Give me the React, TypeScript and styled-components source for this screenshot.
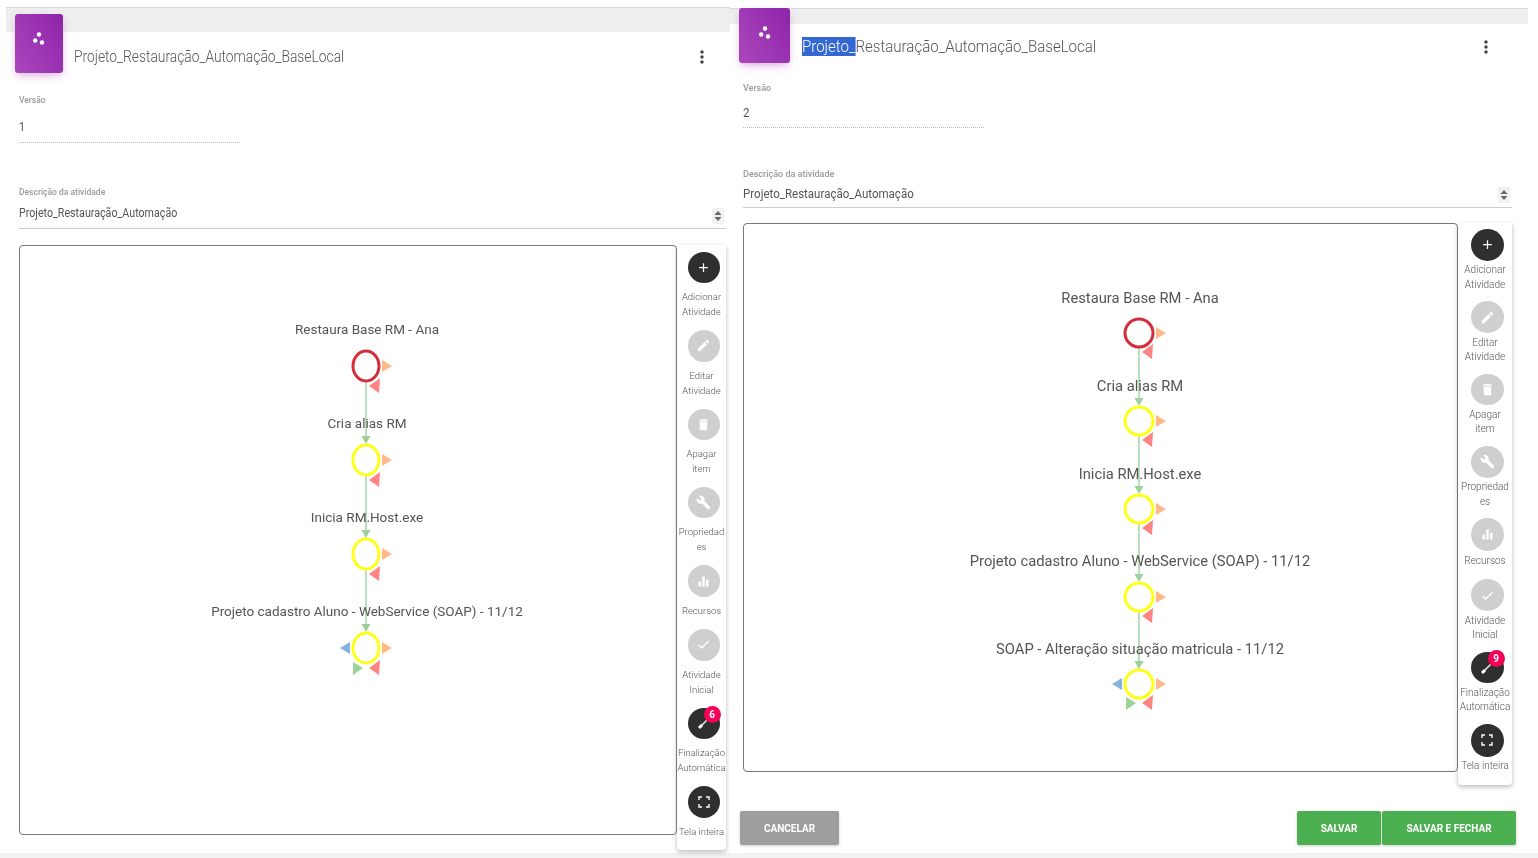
import React from "react";
import styled, { createGlobalStyle } from "styled-components";
import { MdAdd, MdEdit, MdDelete, MdBuild, MdEqualizer, MdCheck, MdMoreVert } from "react-icons/md";

type Metrics = {
  width: number;
  bandHeight: number;
  bandTop: number;
  logoW: number;
  logoH: number;
  logoTop: number;
  titleGap: number;
  titleScale: number;
  kebabRight: number;
  contentRight: number;
  versionGap: number;
  versionValueGap: number;
  versionPad: number;
  versionWidth: number;
  labelSize: number;
  descGap: number;
  descValueGap: number;
  descPad: number;
  valueScale: number;
  canvasGap: number;
  canvasW: number;
  canvasH: number;
  toolW: number;
  toolH: number;
  toolPad: number;
  toolMin: number;
  circle: number;
  toolLabelSize: number;
  toolLabelInset: number;
  labelGap: number;
  labelLine: number;
  itemGap: number;
  nodeRx: number;
  nodeRy: number;
  graphSize: number;
};

const leftMetrics: Metrics = {
  width: 724,
  bandHeight: 25,
  bandTop: 7,
  logoW: 48,
  logoH: 59,
  logoTop: -18,
  titleGap: 11,
  titleScale: 0.863,
  kebabRight: 18,
  contentRight: 4,
  versionGap: 21,
  versionValueGap: 13,
  versionPad: 7,
  versionWidth: 221,
  labelSize: 8.5,
  descGap: 43,
  descValueGap: 7,
  descPad: 7,
  valueScale: 0.89,
  canvasGap: 16,
  canvasW: 658,
  canvasH: 590,
  toolW: 49,
  toolH: 605,
  toolPad: 7,
  toolMin: 53,
  circle: 32,
  toolLabelSize: 9.5,
  toolLabelInset: 0,
  labelGap: 6,
  labelLine: 15,
  itemGap: 11,
  nodeRx: 13,
  nodeRy: 15,
  graphSize: 13.5,
};

const rightMetrics: Metrics = {
  width: 798,
  bandHeight: 16,
  bandTop: 8,
  logoW: 51,
  logoH: 55,
  logoTop: -16,
  titleGap: 12,
  titleScale: 0.94,
  kebabRight: 32,
  contentRight: 16,
  versionGap: 19,
  versionValueGap: 11,
  versionPad: 6,
  versionWidth: 241,
  labelSize: 9,
  descGap: 40,
  descValueGap: 6,
  descPad: 5,
  valueScale: 0.96,
  canvasGap: 15,
  canvasW: 715,
  canvasH: 549,
  toolW: 54,
  toolH: 562,
  toolPad: 6,
  toolMin: 52,
  circle: 33,
  toolLabelSize: 10,
  toolLabelInset: 1,
  labelGap: 2.5,
  labelLine: 14.5,
  itemGap: 9,
  nodeRx: 14,
  nodeRy: 14,
  graphSize: 14.75,
};

const GlobalStyle = createGlobalStyle`
  html, body {
    margin: 0;
    padding: 0;
    background: #f4f4f4;
    overflow: hidden;
  }
  body {
    font-family: Roboto, "Liberation Sans", sans-serif;
    color: #555;
  }
`;

const Page = styled.div`
  display: flex;
  width: 1538px;
  height: 858px;
  padding-left: 6px;
  box-sizing: border-box;
  background: linear-gradient(#fff 853px, #f2f2f2 853px);
  filter: blur(0.5px);
`;

const Panel = styled.section<{ $m: Metrics }>`
  width: ${(p) => p.$m.width}px;
  height: 853px;
  padding-top: ${(p) => p.$m.bandTop}px;
  box-sizing: border-box;
  background: #fff;
`;

const Band = styled.div<{ $m: Metrics }>`
  height: ${(p) => p.$m.bandHeight}px;
  background: #eee;
  border-top: 1px solid #d9d9d9;
  box-sizing: border-box;
`;

const Header = styled.header<{ $m: Metrics }>`
  display: flex;
  align-items: flex-end;
  margin-top: ${(p) => p.$m.logoTop}px;
  padding: 0 ${(p) => p.$m.kebabRight}px 0 9px;
  position: relative;
`;

const Logo = styled.div<{ $m: Metrics }>`
  width: ${(p) => p.$m.logoW}px;
  height: ${(p) => p.$m.logoH}px;
  flex: none;
  display: flex;
  justify-content: center;
  padding-top: 17px;
  box-sizing: border-box;
  border-radius: 3px;
  background: linear-gradient(60deg, #ab47bc, #8e24aa);
  box-shadow: 0 4px 10px -2px rgba(156, 39, 176, 0.4);
`;

const Title = styled.h1<{ $m: Metrics }>`
  margin: 0 0 6px ${(p) => p.$m.titleGap}px;
  font-size: 16px;
  line-height: 20px;
  font-weight: 300;
  color: #555;
  transform: scaleX(${(p) => p.$m.titleScale});
  transform-origin: left center;
`;

const Selected = styled.span`
  background: #3367d1;
  color: #fff;
`;

const Kebab = styled.button`
  margin: 0 0 6px auto;
  padding: 0;
  width: 20px;
  height: 20px;
  border: 0;
  background: none;
  color: #444;
  font-size: 20px;
  display: flex;
`;

const Content = styled.div<{ $m: Metrics }>`
  padding: 0 ${(p) => p.$m.contentRight}px 0 13px;
`;

const FieldLabel = styled.div<{ $m: Metrics }>`
  font-size: ${(p) => p.$m.labelSize}px;
  font-weight: 500;
  line-height: 12px;
  color: #999;
`;

const VersionField = styled.div<{ $m: Metrics }>`
  width: ${(p) => p.$m.versionWidth}px;
  margin-top: ${(p) => p.$m.versionGap}px;
  border-bottom: 1px dotted #bbb;
  padding-bottom: ${(p) => p.$m.versionPad}px;

  ${FieldLabel} {
    margin-bottom: ${(p) => p.$m.versionValueGap}px;
  }
`;

const DescField = styled.div<{ $m: Metrics }>`
  position: relative;
  margin-top: ${(p) => p.$m.descGap}px;
  border-bottom: 1px solid #ccc;
  padding-bottom: ${(p) => p.$m.descPad}px;

  ${FieldLabel} {
    margin-bottom: ${(p) => p.$m.descValueGap}px;
  }
`;

const FieldValue = styled.div<{ $m: Metrics }>`
  font-size: 12px;
  line-height: 16px;
  color: #555;
  transform: scaleX(${(p) => p.$m.valueScale});
  transform-origin: left center;
`;

const Spinner = styled.svg`
  position: absolute;
  right: 2px;
  bottom: 4px;
  background: #f0f0f0;
`;

const Editor = styled.div<{ $m: Metrics }>`
  display: flex;
  align-items: flex-start;
  margin-top: ${(p) => p.$m.canvasGap}px;
`;

const Canvas = styled.div<{ $m: Metrics }>`
  position: relative;
  width: ${(p) => p.$m.canvasW}px;
  height: ${(p) => p.$m.canvasH}px;
  flex: none;
  box-sizing: border-box;
  border: 1.5px solid #777;
  border-radius: 4px;
`;

const GraphLayer = styled.svg`
  position: absolute;
  left: -1px;
  top: -1px;
`;

const NodeLabel = styled.div<{ $m: Metrics }>`
  position: absolute;
  transform: translate(-50%, -50%);
  white-space: nowrap;
  font-size: ${(p) => p.$m.graphSize}px;
  line-height: 18px;
  color: #555;
`;

const Toolbar = styled.nav<{ $m: Metrics }>`
  width: ${(p) => p.$m.toolW}px;
  height: ${(p) => p.$m.toolH}px;
  flex: none;
  padding-top: ${(p) => p.$m.toolPad}px;
  box-sizing: border-box;
  background: #fff;
  border-radius: 0 0 4px 4px;
  box-shadow: 0 2px 5px rgba(0, 0, 0, 0.28);
  display: flex;
  flex-direction: column;
  align-items: center;
`;

const Tool = styled.div<{ $m: Metrics }>`
  width: 100%;
  min-height: ${(p) => p.$m.toolMin}px;
  display: flex;
  flex-direction: column;
  align-items: center;
  margin-bottom: ${(p) => p.$m.itemGap}px;
`;

const Circle = styled.div<{ $m: Metrics; $active: boolean }>`
  position: relative;
  left: 2px;
  width: ${(p) => p.$m.circle}px;
  height: ${(p) => p.$m.circle}px;
  border-radius: 50%;
  display: flex;
  align-items: center;
  justify-content: center;
  color: #fff;
  font-size: 15px;
  background: ${(p) => (p.$active ? "#2f2f2f" : "#cfcfcf")};
`;

const Badge = styled.span`
  position: absolute;
  top: -2px;
  right: -1px;
  width: 17px;
  height: 17px;
  border-radius: 50%;
  background: #f50057;
  color: #fff;
  font-size: 10px;
  font-weight: 700;
  line-height: 17px;
  text-align: center;
`;

const ToolLabel = styled.div<{ $m: Metrics }>`
  width: 100%;
  box-sizing: border-box;
  padding: 0 ${(p) => p.$m.toolLabelInset}px;
  margin-top: ${(p) => p.$m.labelGap}px;
  font-size: ${(p) => p.$m.toolLabelSize}px;
  font-weight: 300;
  line-height: ${(p) => p.$m.labelLine}px;
  text-align: center;
  color: #555;
  overflow-wrap: anywhere;
`;

const Footer = styled.footer`
  display: flex;
  gap: 1px;
  margin: 26px -4px 0 -3px;
`;

const Button = styled.button<{ $color: string; $width: number }>`
  width: ${(p) => p.$width}px;
  height: 34px;
  border: 0;
  border-radius: 2px;
  background: ${(p) => p.$color};
  color: #fff;
  font-family: Roboto, "Liberation Sans", sans-serif;
  font-size: 10px;
  font-weight: 700;
  box-shadow: 0 1px 3px rgba(0, 0, 0, 0.2);
`;

const Spacer = styled.div`
  flex: 1;
`;

const GroupIcon = () => (
  <svg width="14" height="16" viewBox="0 0 14 16" fill="#fff">
    <circle cx="7" cy="3.5" r="2.2" />
    <circle cx="3.2" cy="9.5" r="2.2" />
    <circle cx="10" cy="11.5" r="2.2" />
  </svg>
);

const LinkIcon = () => (
  <svg width="14" height="14" viewBox="0 0 14 14" fill="none" stroke="#fff">
    <path d="M3 11 L11 3" strokeWidth="1.2" />
    <path d="M2 12 L5 9" strokeWidth="3" />
  </svg>
);

const FullscreenIcon = () => (
  <svg width="12" height="12" viewBox="0 0 12 12" fill="none" stroke="#fff" strokeWidth="1.4">
    <path d="M1 4V1H4M8 1H11V4M11 8V11H8M4 11H1V8" />
  </svg>
);

type ToolDef = {
  label: string;
  icon: React.ReactNode;
  active?: boolean;
};

const toolDefs: ToolDef[] = [
  { label: "Adicionar Atividade", icon: <MdAdd />, active: true },
  { label: "Editar Atividade", icon: <MdEdit /> },
  { label: "Apagar item", icon: <MdDelete /> },
  { label: "Propriedades", icon: <MdBuild /> },
  { label: "Recursos", icon: <MdEqualizer /> },
  { label: "Atividade Inicial", icon: <MdCheck /> },
  { label: "Finalização Automática", icon: <LinkIcon />, active: true },
  { label: "Tela inteira", icon: <FullscreenIcon />, active: true },
];

type GraphNode = { label: string; y: number; labelY: number };

const leftNodes: GraphNode[] = [
  { label: "Restaura Base RM - Ana", y: 121, labelY: 83 },
  { label: "Cria alias RM", y: 215, labelY: 177 },
  { label: "Inicia RM.Host.exe", y: 309, labelY: 271 },
  { label: "Projeto cadastro Aluno - WebService (SOAP) - 11/12", y: 403, labelY: 365 },
];

const rightNodes: GraphNode[] = [
  { label: "Restaura Base RM - Ana", y: 110, labelY: 74 },
  { label: "Cria alias RM", y: 198, labelY: 162 },
  { label: "Inicia RM.Host.exe", y: 286, labelY: 250 },
  { label: "Projeto cadastro Aluno - WebService (SOAP) - 11/12", y: 374, labelY: 337 },
  { label: "SOAP - Alteração situação matricula - 11/12", y: 461, labelY: 425 },
];

const Graph: React.FC<{ m: Metrics; nodes: GraphNode[]; cx: number }> = ({ m, nodes, cx }) => (
  <>
    <GraphLayer width={m.canvasW} height={m.canvasH}>
      {nodes.map((n, i) => {
        const next = nodes[i + 1];
        const last = i === nodes.length - 1;
        const rx = m.nodeRx;
        const ry = m.nodeRy;
        return (
          <g key={n.label}>
            {next && (
              <>
                <line x1={cx} y1={n.y + ry} x2={cx} y2={next.y - ry - 6} stroke="#a9d9a9" strokeWidth="1.6" />
                <path d={`M${cx - 4.5} ${next.y - ry - 9}H${cx + 4.5}L${cx} ${next.y - ry - 1}Z`} fill="#9ccf9c" />
              </>
            )}
            <ellipse
              cx={cx}
              cy={n.y}
              rx={rx}
              ry={ry}
              fill="#fff"
              stroke={i === 0 ? "#d32f3a" : "#ffff1a"}
              strokeWidth="3"
            />
            <path
              d={`M${cx + rx + 3} ${n.y - 6}L${cx + rx + 13} ${n.y}L${cx + rx + 3} ${n.y + 6}Z`}
              fill="#ffb98a"
            />
            <path
              d={`M${cx + 14} ${n.y + ry - 3}L${cx + 13} ${n.y + ry + 12}L${cx + 3} ${n.y + ry + 5}Z`}
              fill="#ff8585"
            />
            {last && (
              <>
                <path
                  d={`M${cx - rx - 3} ${n.y - 6}L${cx - rx - 13} ${n.y}L${cx - rx - 3} ${n.y + 6}Z`}
                  fill="#85b4dc"
                />
                <path
                  d={`M${cx - 13} ${n.y + ry - 1}L${cx - 3} ${n.y + ry + 5}L${cx - 13} ${n.y + ry + 12}Z`}
                  fill="#9ed29a"
                />
              </>
            )}
          </g>
        );
      })}
    </GraphLayer>
    {nodes.map((n) => (
      <NodeLabel key={n.label} $m={m} style={{ left: cx, top: n.labelY }}>
        {n.label}
      </NodeLabel>
    ))}
  </>
);

type ActivityPanelProps = {
  m: Metrics;
  version: string;
  badge: number;
  nodes: GraphNode[];
  cx: number;
  selected?: boolean;
  footer?: boolean;
};

const ActivityPanel: React.FC<ActivityPanelProps> = ({ m, version, badge, nodes, cx, selected, footer }) => (
  <Panel $m={m}>
    <Band $m={m} />
    <Header $m={m}>
      <Logo $m={m}>
        <GroupIcon />
      </Logo>
      <Title $m={m}>
        {selected ? <Selected>Projeto_</Selected> : "Projeto_"}
        Restauração_Automação_BaseLocal
      </Title>
      <Kebab>
        <MdMoreVert />
      </Kebab>
    </Header>
    <Content $m={m}>
      <VersionField $m={m}>
        <FieldLabel $m={m}>Versão</FieldLabel>
        <FieldValue $m={m}>{version}</FieldValue>
      </VersionField>
      <DescField $m={m}>
        <FieldLabel $m={m}>Descrição da atividade</FieldLabel>
        <FieldValue $m={m}>Projeto_Restauração_Automação</FieldValue>
        <Spinner width="12" height="16" viewBox="0 0 12 16" fill="#666">
          <path d="M6 3L9.5 7H2.5Z" />
          <path d="M6 13L2.5 9H9.5Z" />
        </Spinner>
      </DescField>
      <Editor $m={m}>
        <Canvas $m={m}>
          <Graph m={m} nodes={nodes} cx={cx} />
        </Canvas>
        <Toolbar $m={m}>
          {toolDefs.map((t) => (
            <Tool key={t.label} $m={m}>
              <Circle $m={m} $active={!!t.active}>
                {t.icon}
                {t.label.startsWith("Finaliza") && <Badge>{badge}</Badge>}
              </Circle>
              <ToolLabel $m={m}>{t.label}</ToolLabel>
            </Tool>
          ))}
        </Toolbar>
      </Editor>
      {footer && (
        <Footer>
          <Button $color="#9e9e9e" $width={99}>
            CANCELAR
          </Button>
          <Spacer />
          <Button $color="#4caf50" $width={84}>
            SALVAR
          </Button>
          <Button $color="#4caf50" $width={134}>
            SALVAR E FECHAR
          </Button>
        </Footer>
      )}
    </Content>
  </Panel>
);

export default function App() {
  return (
    <Page>
      <GlobalStyle />
      <ActivityPanel m={leftMetrics} version="1" badge={6} nodes={leftNodes} cx={347} />
      <ActivityPanel m={rightMetrics} version="2" badge={9} nodes={rightNodes} cx={396} selected footer />
    </Page>
  );
}
